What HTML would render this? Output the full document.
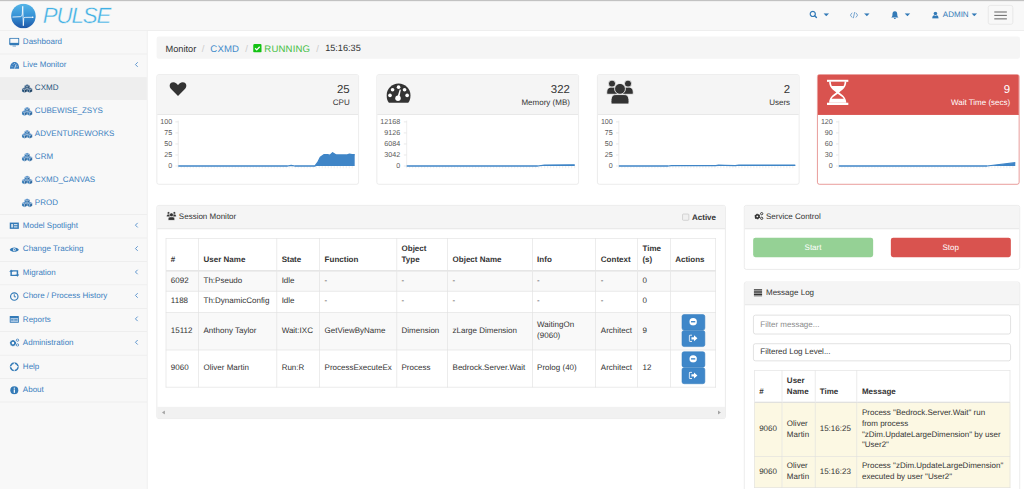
<!DOCTYPE html>
<html><head><meta charset="utf-8">
<style>
html,body{margin:0;padding:0;width:1024px;height:489px;overflow:hidden;background:#fff}
#root{text-rendering:geometricPrecision;position:absolute;left:0;top:0;width:1792px;height:856px;transform:scale(0.5714286);transform-origin:0 0;font-family:"Liberation Sans",sans-serif;font-size:14px;line-height:20px;color:#333;overflow:hidden;background:#fff}
.abs{position:absolute}
#hdr{position:absolute;left:0;top:0;width:1792px;height:54px;box-sizing:border-box;background:#f8f8f8;border-top:2px solid #c2c2c2;border-bottom:1px solid #e7e7e7}
.blue{color:#337ab7}
#side{position:absolute;left:0;top:54px;width:257px;height:802px;background:#f8f8f8;border-right:1px solid #e7e7e7}
.mi{position:relative;height:40px;border-bottom:1px solid #e7e7e7;color:#3b7fc0}
.mi .t{position:absolute;left:40px;top:7.8px;line-height:20px;white-space:nowrap}
.mi .ic{position:absolute;left:16px;top:12px}
.mi .ar{position:absolute;left:235px;top:12.5px}
.sub{position:relative;height:40px;color:#3b7fc0}
.sub .t{position:absolute;left:61px;top:7.8px;line-height:20px;white-space:nowrap}
.sub .ic{position:absolute;left:38px;top:12px}
.sub.act{background:#eee;color:#23527c}
.panel{position:absolute;box-sizing:border-box;border:1px solid #ddd;border-radius:4px;background:#fff;overflow:hidden}
.ph{background:#f5f5f5;border-bottom:1px solid #ddd;box-sizing:border-box;position:relative}
.red{border-color:#d9534f}
.red .ph{background:#d9534f;border-color:#d9534f;color:#fff}
.huge{position:absolute;right:15px;top:11.5px;font-size:20px;line-height:28.57px;text-align:right}
.lbl{position:absolute;right:15px;top:37px;line-height:20px;text-align:right;white-space:nowrap}
table{border-collapse:collapse;table-layout:fixed}
td,th{border:1px solid #ddd;padding:0 8px 3px;text-align:left;vertical-align:middle;line-height:19.25px;box-sizing:border-box}
th{font-weight:bold;vertical-align:bottom;border-bottom:2px solid #ddd;padding-bottom:9px}
.striped tr.o td{background:#f9f9f9}
.btnp{display:block;width:41px;height:28.5px;box-sizing:border-box;border:1px solid #3a80c0;background:#3f87c9;border-radius:4px;margin:0 auto;position:relative;left:0.7px;top:-1.2px}
</style></head><body>
<div id="root">

<!-- HEADER -->
<div id="hdr">
  <svg class="abs" style="left:19px;top:4px" width="44" height="44" viewBox="0 0 44 44">
    <defs><linearGradient id="lg" x1="0" y1="0" x2="0" y2="1"><stop offset="0" stop-color="#56b6e8"/><stop offset="0.5" stop-color="#3692d6"/><stop offset="1" stop-color="#1d55a6"/></linearGradient></defs>
    <circle cx="22" cy="22" r="21.5" fill="url(#lg)"/>
    <path d="M3.5 23.8 L16.5 23.2 C18.5 23 19.5 22 20 18.5 L20.8 5 L21.8 39 L22.6 26 C22.9 24.8 23.5 24.4 25 24.4 L38.5 24.2" fill="none" stroke="#fff" stroke-width="1.4" stroke-linejoin="round" stroke-linecap="round"/><circle cx="38.2" cy="24.2" r="1.3" fill="#fff"/>
  </svg>
  <div class="abs" style="left:75px;top:5px;font-size:39px;line-height:44px;font-style:italic;color:#40b0e4;letter-spacing:-2px;-webkit-text-stroke:0.7px #f8f8f8">PULSE</div>

  <!-- right icons -->
  <svg class="abs" style="left:1416px;top:16px" width="15" height="15" viewBox="0 0 17 17"><circle cx="7.2" cy="7.2" r="5.1" fill="none" stroke="#337ab7" stroke-width="2.4"/><path d="M11 11 L14.5 14.5" stroke="#337ab7" stroke-width="2.7" stroke-linecap="round"/></svg>
  <svg class="abs" style="left:1441px;top:21px" width="10" height="6" viewBox="0 0 10 6"><path d="M0 0 H10 L5 5.5Z" fill="#337ab7"/></svg>
  <svg class="abs" style="left:1487px;top:18px" width="15" height="13" viewBox="0 0 16 14"><path d="M4.5 2.5 L1.2 7 L4.5 11.5 M11.5 2.5 L14.8 7 L11.5 11.5 M9.3 1.2 L6.7 12.8" fill="none" stroke="#4a88c2" stroke-width="1.4"/></svg>
  <svg class="abs" style="left:1512px;top:21px" width="10" height="6" viewBox="0 0 10 6"><path d="M0 0 H10 L5 5.5Z" fill="#337ab7"/></svg>
  <svg class="abs" style="left:1559px;top:17px" width="14" height="14.5" viewBox="0 0 16 17"><path d="M8 1 C12 1 13 4.5 13 8 C13 11 14 12.5 15.5 13.5 H0.5 C2 12.5 3 11 3 8 C3 4.5 4 1 8 1Z M6 14.5 H10 C10 16 9 16.5 8 16.5 C7 16.5 6 16 6 14.5Z" fill="#337ab7"/></svg>
  <svg class="abs" style="left:1583px;top:21px" width="10" height="6" viewBox="0 0 10 6"><path d="M0 0 H10 L5 5.5Z" fill="#337ab7"/></svg>
  <svg class="abs" style="left:1631px;top:18px" width="12" height="12.5" viewBox="0 0 14 14"><circle cx="7" cy="3.8" r="3.6" fill="#337ab7"/><path d="M0.5 14 C0.5 9 2.5 7.5 4.5 7.5 L7 9 L9.5 7.5 C11.5 7.5 13.5 9 13.5 14Z" fill="#337ab7"/></svg>
  <div class="abs blue" style="left:1650px;top:12.5px;line-height:20px">ADMIN</div>
  <svg class="abs" style="left:1700px;top:21px" width="10" height="6" viewBox="0 0 10 6"><path d="M0 0 H10 L5 5.5Z" fill="#337ab7"/></svg>
  <div class="abs" style="left:1729px;top:7px;width:44px;height:34px;box-sizing:border-box;border:1px solid #ddd;border-radius:4px">
    <div class="abs" style="left:10px;top:10px;width:22px;height:2px;background:#777"></div>
    <div class="abs" style="left:10px;top:16px;width:22px;height:2px;background:#777"></div>
    <div class="abs" style="left:10px;top:22px;width:22px;height:2px;background:#777"></div>
  </div>
</div>

<!-- SIDEBAR -->
<div id="side">
  <div class="mi"><svg class="ic" width="18" height="16" viewBox="0 0 18 16"><rect x="1" y="1" width="16" height="11" rx="1" fill="none" stroke="#337ab7" stroke-width="2"/><rect x="1" y="9" width="16" height="3" fill="#337ab7"/><path d="M6 14 H12 V15.5 H6Z" fill="#337ab7"/></svg><span class="t">Dashboard</span></div>
  <div class="mi" style="height:280px">
    <div style="position:relative;height:40px"><svg class="ic" style="position:absolute;left:16.5px;top:12.5px" width="17" height="13" viewBox="0 0 17 13"><path d="M0.5 12.5 C0.3 5 3.8 0.5 8.5 0.5 C13.2 0.5 16.7 5 16.5 12.5Z" fill="#3b7fc0"/><path d="M8.5 12 L11 5" stroke="#f8f8f8" stroke-width="1.3"/><path d="M3.2 8 L4.8 8.6 M5 3.8 L6.2 5 M8.5 2.4 V4 M12 3.8 L10.8 5 M13.8 8 L12.2 8.6" stroke="#f8f8f8" stroke-width="1"/></svg><span class="t">Live Monitor</span><svg class="ar" width="8" height="10" viewBox="0 0 8 10"><path d="M6 1 L2 5 L6 9" fill="none" stroke="#5a93cc" stroke-width="1.7"/></svg></div>
    <div class="sub act"><svg class="ic" style="top:11.5px" width="19" height="16" viewBox="0 0 19 16"><path d="M9.5 0.3 L14.1 2.5999999999999996 L9.5 4.8999999999999995 L4.9 2.5999999999999996Z" stroke="#f8f8f8" stroke-width="0.4" fill="#4a6e94"/><path d="M4.9 2.5999999999999996 L9.5 4.8999999999999995 L9.5 9.9 L4.9 7.6Z" stroke="#f8f8f8" stroke-width="0.4" fill="#23527c"/><path d="M9.5 4.8999999999999995 L14.1 2.5999999999999996 L14.1 7.6 L9.5 9.9Z" stroke="#f8f8f8" stroke-width="0.4" fill="#1b4063"/><path d="M4.9 5.9 L9.5 8.2 L4.9 10.5 L0.3000000000000007 8.2Z" stroke="#f8f8f8" stroke-width="0.4" fill="#4a6e94"/><path d="M0.3000000000000007 8.2 L4.9 10.5 L4.9 15.5 L0.3000000000000007 13.2Z" stroke="#f8f8f8" stroke-width="0.4" fill="#23527c"/><path d="M4.9 10.5 L9.5 8.2 L9.5 13.2 L4.9 15.5Z" stroke="#f8f8f8" stroke-width="0.4" fill="#1b4063"/><path d="M14.1 5.9 L18.7 8.2 L14.1 10.5 L9.5 8.2Z" stroke="#f8f8f8" stroke-width="0.4" fill="#4a6e94"/><path d="M9.5 8.2 L14.1 10.5 L14.1 15.5 L9.5 13.2Z" stroke="#f8f8f8" stroke-width="0.4" fill="#23527c"/><path d="M14.1 10.5 L18.7 8.2 L18.7 13.2 L14.1 15.5Z" stroke="#f8f8f8" stroke-width="0.4" fill="#1b4063"/></svg><span class="t">CXMD</span></div>
    <div class="sub"><svg class="ic" style="top:11.5px" width="19" height="16" viewBox="0 0 19 16"><path d="M9.5 0.3 L14.1 2.5999999999999996 L9.5 4.8999999999999995 L4.9 2.5999999999999996Z" stroke="#f8f8f8" stroke-width="0.4" fill="#5b93cc"/><path d="M4.9 2.5999999999999996 L9.5 4.8999999999999995 L9.5 9.9 L4.9 7.6Z" stroke="#f8f8f8" stroke-width="0.4" fill="#337ab7"/><path d="M9.5 4.8999999999999995 L14.1 2.5999999999999996 L14.1 7.6 L9.5 9.9Z" stroke="#f8f8f8" stroke-width="0.4" fill="#2b67a0"/><path d="M4.9 5.9 L9.5 8.2 L4.9 10.5 L0.3000000000000007 8.2Z" stroke="#f8f8f8" stroke-width="0.4" fill="#5b93cc"/><path d="M0.3000000000000007 8.2 L4.9 10.5 L4.9 15.5 L0.3000000000000007 13.2Z" stroke="#f8f8f8" stroke-width="0.4" fill="#337ab7"/><path d="M4.9 10.5 L9.5 8.2 L9.5 13.2 L4.9 15.5Z" stroke="#f8f8f8" stroke-width="0.4" fill="#2b67a0"/><path d="M14.1 5.9 L18.7 8.2 L14.1 10.5 L9.5 8.2Z" stroke="#f8f8f8" stroke-width="0.4" fill="#5b93cc"/><path d="M9.5 8.2 L14.1 10.5 L14.1 15.5 L9.5 13.2Z" stroke="#f8f8f8" stroke-width="0.4" fill="#337ab7"/><path d="M14.1 10.5 L18.7 8.2 L18.7 13.2 L14.1 15.5Z" stroke="#f8f8f8" stroke-width="0.4" fill="#2b67a0"/></svg><span class="t">CUBEWISE_ZSYS</span></div>
    <div class="sub"><svg class="ic" style="top:11.5px" width="19" height="16" viewBox="0 0 19 16"><path d="M9.5 0.3 L14.1 2.5999999999999996 L9.5 4.8999999999999995 L4.9 2.5999999999999996Z" stroke="#f8f8f8" stroke-width="0.4" fill="#5b93cc"/><path d="M4.9 2.5999999999999996 L9.5 4.8999999999999995 L9.5 9.9 L4.9 7.6Z" stroke="#f8f8f8" stroke-width="0.4" fill="#337ab7"/><path d="M9.5 4.8999999999999995 L14.1 2.5999999999999996 L14.1 7.6 L9.5 9.9Z" stroke="#f8f8f8" stroke-width="0.4" fill="#2b67a0"/><path d="M4.9 5.9 L9.5 8.2 L4.9 10.5 L0.3000000000000007 8.2Z" stroke="#f8f8f8" stroke-width="0.4" fill="#5b93cc"/><path d="M0.3000000000000007 8.2 L4.9 10.5 L4.9 15.5 L0.3000000000000007 13.2Z" stroke="#f8f8f8" stroke-width="0.4" fill="#337ab7"/><path d="M4.9 10.5 L9.5 8.2 L9.5 13.2 L4.9 15.5Z" stroke="#f8f8f8" stroke-width="0.4" fill="#2b67a0"/><path d="M14.1 5.9 L18.7 8.2 L14.1 10.5 L9.5 8.2Z" stroke="#f8f8f8" stroke-width="0.4" fill="#5b93cc"/><path d="M9.5 8.2 L14.1 10.5 L14.1 15.5 L9.5 13.2Z" stroke="#f8f8f8" stroke-width="0.4" fill="#337ab7"/><path d="M14.1 10.5 L18.7 8.2 L18.7 13.2 L14.1 15.5Z" stroke="#f8f8f8" stroke-width="0.4" fill="#2b67a0"/></svg><span class="t">ADVENTUREWORKS</span></div>
    <div class="sub"><svg class="ic" style="top:11.5px" width="19" height="16" viewBox="0 0 19 16"><path d="M9.5 0.3 L14.1 2.5999999999999996 L9.5 4.8999999999999995 L4.9 2.5999999999999996Z" stroke="#f8f8f8" stroke-width="0.4" fill="#5b93cc"/><path d="M4.9 2.5999999999999996 L9.5 4.8999999999999995 L9.5 9.9 L4.9 7.6Z" stroke="#f8f8f8" stroke-width="0.4" fill="#337ab7"/><path d="M9.5 4.8999999999999995 L14.1 2.5999999999999996 L14.1 7.6 L9.5 9.9Z" stroke="#f8f8f8" stroke-width="0.4" fill="#2b67a0"/><path d="M4.9 5.9 L9.5 8.2 L4.9 10.5 L0.3000000000000007 8.2Z" stroke="#f8f8f8" stroke-width="0.4" fill="#5b93cc"/><path d="M0.3000000000000007 8.2 L4.9 10.5 L4.9 15.5 L0.3000000000000007 13.2Z" stroke="#f8f8f8" stroke-width="0.4" fill="#337ab7"/><path d="M4.9 10.5 L9.5 8.2 L9.5 13.2 L4.9 15.5Z" stroke="#f8f8f8" stroke-width="0.4" fill="#2b67a0"/><path d="M14.1 5.9 L18.7 8.2 L14.1 10.5 L9.5 8.2Z" stroke="#f8f8f8" stroke-width="0.4" fill="#5b93cc"/><path d="M9.5 8.2 L14.1 10.5 L14.1 15.5 L9.5 13.2Z" stroke="#f8f8f8" stroke-width="0.4" fill="#337ab7"/><path d="M14.1 10.5 L18.7 8.2 L18.7 13.2 L14.1 15.5Z" stroke="#f8f8f8" stroke-width="0.4" fill="#2b67a0"/></svg><span class="t">CRM</span></div>
    <div class="sub"><svg class="ic" style="top:11.5px" width="19" height="16" viewBox="0 0 19 16"><path d="M9.5 0.3 L14.1 2.5999999999999996 L9.5 4.8999999999999995 L4.9 2.5999999999999996Z" stroke="#f8f8f8" stroke-width="0.4" fill="#5b93cc"/><path d="M4.9 2.5999999999999996 L9.5 4.8999999999999995 L9.5 9.9 L4.9 7.6Z" stroke="#f8f8f8" stroke-width="0.4" fill="#337ab7"/><path d="M9.5 4.8999999999999995 L14.1 2.5999999999999996 L14.1 7.6 L9.5 9.9Z" stroke="#f8f8f8" stroke-width="0.4" fill="#2b67a0"/><path d="M4.9 5.9 L9.5 8.2 L4.9 10.5 L0.3000000000000007 8.2Z" stroke="#f8f8f8" stroke-width="0.4" fill="#5b93cc"/><path d="M0.3000000000000007 8.2 L4.9 10.5 L4.9 15.5 L0.3000000000000007 13.2Z" stroke="#f8f8f8" stroke-width="0.4" fill="#337ab7"/><path d="M4.9 10.5 L9.5 8.2 L9.5 13.2 L4.9 15.5Z" stroke="#f8f8f8" stroke-width="0.4" fill="#2b67a0"/><path d="M14.1 5.9 L18.7 8.2 L14.1 10.5 L9.5 8.2Z" stroke="#f8f8f8" stroke-width="0.4" fill="#5b93cc"/><path d="M9.5 8.2 L14.1 10.5 L14.1 15.5 L9.5 13.2Z" stroke="#f8f8f8" stroke-width="0.4" fill="#337ab7"/><path d="M14.1 10.5 L18.7 8.2 L18.7 13.2 L14.1 15.5Z" stroke="#f8f8f8" stroke-width="0.4" fill="#2b67a0"/></svg><span class="t">CXMD_CANVAS</span></div>
    <div class="sub"><svg class="ic" style="top:11.5px" width="19" height="16" viewBox="0 0 19 16"><path d="M9.5 0.3 L14.1 2.5999999999999996 L9.5 4.8999999999999995 L4.9 2.5999999999999996Z" stroke="#f8f8f8" stroke-width="0.4" fill="#5b93cc"/><path d="M4.9 2.5999999999999996 L9.5 4.8999999999999995 L9.5 9.9 L4.9 7.6Z" stroke="#f8f8f8" stroke-width="0.4" fill="#337ab7"/><path d="M9.5 4.8999999999999995 L14.1 2.5999999999999996 L14.1 7.6 L9.5 9.9Z" stroke="#f8f8f8" stroke-width="0.4" fill="#2b67a0"/><path d="M4.9 5.9 L9.5 8.2 L4.9 10.5 L0.3000000000000007 8.2Z" stroke="#f8f8f8" stroke-width="0.4" fill="#5b93cc"/><path d="M0.3000000000000007 8.2 L4.9 10.5 L4.9 15.5 L0.3000000000000007 13.2Z" stroke="#f8f8f8" stroke-width="0.4" fill="#337ab7"/><path d="M4.9 10.5 L9.5 8.2 L9.5 13.2 L4.9 15.5Z" stroke="#f8f8f8" stroke-width="0.4" fill="#2b67a0"/><path d="M14.1 5.9 L18.7 8.2 L14.1 10.5 L9.5 8.2Z" stroke="#f8f8f8" stroke-width="0.4" fill="#5b93cc"/><path d="M9.5 8.2 L14.1 10.5 L14.1 15.5 L9.5 13.2Z" stroke="#f8f8f8" stroke-width="0.4" fill="#337ab7"/><path d="M14.1 10.5 L18.7 8.2 L18.7 13.2 L14.1 15.5Z" stroke="#f8f8f8" stroke-width="0.4" fill="#2b67a0"/></svg><span class="t">PROD</span></div>
  </div>
  <div class="mi"><svg class="ic" width="18" height="14" viewBox="0 0 18 14"><rect x="1" y="1.5" width="16" height="11" fill="#337ab7"/><path d="M3.5 4 H7 V10 H3.5Z M8.5 4 H14.5 V6 H8.5Z M8.5 8 H14.5 V10 H8.5Z" fill="#f8f8f8" opacity="0.8"/></svg><span class="t">Model Spotlight</span><svg class="ar" width="8" height="10" viewBox="0 0 8 10"><path d="M6 1 L2 5 L6 9" fill="none" stroke="#5a93cc" stroke-width="1.7"/></svg></div>
  <div class="mi"><svg class="ic" style="top:14px" width="18" height="12" viewBox="0 0 18 12"><path d="M1 6 C4 1 14 1 17 6 C14 11 4 11 1 6Z" fill="#337ab7"/><circle cx="9" cy="6" r="2.5" fill="#f8f8f8"/><circle cx="9" cy="6" r="1.3" fill="#337ab7"/></svg><span class="t">Change Tracking</span><svg class="ar" width="8" height="10" viewBox="0 0 8 10"><path d="M6 1 L2 5 L6 9" fill="none" stroke="#5a93cc" stroke-width="1.7"/></svg></div>
  <div class="mi"><svg class="ic" style="top:13px" width="18" height="14" viewBox="0 0 18 14"><path d="M3.5 0.5 L7 4.5 H4.8 V9.8 H11.5 L13.5 12.2 H2.2 V4.5 H0 Z M14.5 13.5 L11 9.5 H13.2 V4.2 H6.5 L4.5 1.8 H15.8 V9.5 H18 Z" fill="#337ab7"/></svg><span class="t">Migration</span><svg class="ar" width="8" height="10" viewBox="0 0 8 10"><path d="M6 1 L2 5 L6 9" fill="none" stroke="#5a93cc" stroke-width="1.7"/></svg></div>
  <div class="mi"><svg class="ic" width="18" height="16" viewBox="0 0 18 16"><circle cx="9" cy="8" r="6.5" fill="none" stroke="#337ab7" stroke-width="2"/><path d="M9 4 V8.5 H12" fill="none" stroke="#337ab7" stroke-width="1.7"/></svg><span class="t">Chore / Process History</span><svg class="ar" width="8" height="10" viewBox="0 0 8 10"><path d="M6 1 L2 5 L6 9" fill="none" stroke="#5a93cc" stroke-width="1.7"/></svg></div>
  <div class="mi"><svg class="ic" style="top:11.5px" width="18" height="14" viewBox="0 0 18 14"><rect x="1" y="1" width="16" height="12" rx="1" fill="#337ab7"/><rect x="2.5" y="4.5" width="13" height="7" fill="#a9c6e3"/><rect x="3.5" y="7" width="4" height="1.6" fill="#337ab7"/><rect x="9" y="7" width="5.5" height="1.6" fill="#337ab7"/></svg><span class="t">Reports</span><svg class="ar" width="8" height="10" viewBox="0 0 8 10"><path d="M6 1 L2 5 L6 9" fill="none" stroke="#5a93cc" stroke-width="1.7"/></svg></div>
  <div class="mi"><svg class="ic" style="top:11px" width="19" height="15" viewBox="0 0 20 16"><circle cx="7" cy="9" r="4.8" fill="none" stroke="#337ab7" stroke-width="2.2" stroke-dasharray="1.6 0.9"/><circle cx="7" cy="9" r="3.6" fill="none" stroke="#337ab7" stroke-width="2.4"/><circle cx="15.5" cy="3.5" r="2.2" fill="none" stroke="#4a88c2" stroke-width="1.7"/><circle cx="15.5" cy="12.5" r="2.2" fill="none" stroke="#4a88c2" stroke-width="1.7"/></svg><span class="t">Administration</span><svg class="ar" width="8" height="10" viewBox="0 0 8 10"><path d="M6 1 L2 5 L6 9" fill="none" stroke="#5a93cc" stroke-width="1.7"/></svg></div>
  <div class="mi"><svg class="ic" width="18" height="16" viewBox="0 0 18 16"><circle cx="9" cy="8" r="6.5" fill="none" stroke="#337ab7" stroke-width="2.8"/><path d="M9 1 V15 M2 8 H16" stroke="#f8f8f8" stroke-width="1.8"/><circle cx="9" cy="8" r="3" fill="#f8f8f8"/></svg><span class="t">Help</span></div>
  <div class="mi"><svg class="ic" width="18" height="16" viewBox="0 0 18 16"><circle cx="9" cy="8" r="7" fill="#337ab7"/><rect x="8" y="6.5" width="2.2" height="6" fill="#f8f8f8"/><circle cx="9.1" cy="4.3" r="1.2" fill="#f8f8f8"/></svg><span class="t">About</span></div>
</div>

<!-- BREADCRUMB -->
<div class="abs" style="left:274px;top:64px;width:1511px;height:39px;background:#f5f5f5;border-radius:4px;font-size:16.8px;line-height:20px">
  <div class="abs" style="left:15.5px;top:12px;white-space:nowrap;font-size:16.2px">Monitor</div>
  <div class="abs" style="left:79px;top:12px;color:#ccc">/</div>
  <div class="abs" style="left:94px;top:12px;color:#428bca;letter-spacing:0.3px">CXMD</div>
  <div class="abs" style="left:155px;top:12px;color:#ccc">/</div>
  <svg class="abs" style="left:169px;top:12.5px" width="15" height="15" viewBox="0 0 15 15"><rect x="0" y="0" width="15" height="15" rx="2.5" fill="#14c214"/><path d="M3.5 7.5 L6.3 10.3 L11.5 4.8" fill="none" stroke="#fff" stroke-width="2.2"/></svg>
  <div class="abs" style="left:188.5px;top:12px;color:#45c045;letter-spacing:0.3px">RUNNING</div>
  <div class="abs" style="left:279.5px;top:12px;color:#ccc">/</div>
  <div class="abs" style="left:295px;top:12px;font-size:16px">15:16:35</div>
</div>

<div class="panel" style="left:274px;top:130px;width:354px;height:193px">
<svg class="abs" style="left:0;top:0" width="354" height="193" viewBox="0 0 354 193"><line x1="37" y1="80" x2="37" y2="159.5" stroke="#ebebeb" stroke-width="1.5"/><line x1="32" y1="159.50" x2="37" y2="159.50" stroke="#e5e5e5" stroke-width="1.5"/><text x="26.4" y="162.80" text-anchor="end" font-size="12.5" fill="#5a5a5a">0</text><line x1="32" y1="140.20" x2="37" y2="140.20" stroke="#e5e5e5" stroke-width="1.5"/><text x="26.4" y="143.50" text-anchor="end" font-size="12.5" fill="#5a5a5a">25</text><line x1="32" y1="120.90" x2="37" y2="120.90" stroke="#e5e5e5" stroke-width="1.5"/><text x="26.4" y="124.20" text-anchor="end" font-size="12.5" fill="#5a5a5a">50</text><line x1="32" y1="101.60" x2="37" y2="101.60" stroke="#e5e5e5" stroke-width="1.5"/><text x="26.4" y="104.90" text-anchor="end" font-size="12.5" fill="#5a5a5a">75</text><line x1="32" y1="82.30" x2="37" y2="82.30" stroke="#e5e5e5" stroke-width="1.5"/><text x="26.4" y="85.60" text-anchor="end" font-size="12.5" fill="#5a5a5a">100</text><path d="M37.00 159.5 v4 M42.25 159.5 v4 M47.50 159.5 v4 M52.75 159.5 v4 M58.00 159.5 v4 M63.25 159.5 v4 M68.50 159.5 v4 M73.75 159.5 v4 M79.00 159.5 v4 M84.25 159.5 v4 M89.50 159.5 v4 M94.75 159.5 v4 M100.00 159.5 v4 M105.25 159.5 v4 M110.50 159.5 v4 M115.75 159.5 v4 M121.00 159.5 v4 M126.25 159.5 v4 M131.50 159.5 v4 M136.75 159.5 v4 M142.00 159.5 v4 M147.25 159.5 v4 M152.50 159.5 v4 M157.75 159.5 v4 M163.00 159.5 v4 M168.25 159.5 v4 M173.50 159.5 v4 M178.75 159.5 v4 M184.00 159.5 v4 M189.25 159.5 v4 M194.50 159.5 v4 M199.75 159.5 v4 M205.00 159.5 v4 M210.25 159.5 v4 M215.50 159.5 v4 M220.75 159.5 v4 M226.00 159.5 v4 M231.25 159.5 v4 M236.50 159.5 v4 M241.75 159.5 v4 M247.00 159.5 v4 M252.25 159.5 v4 M257.50 159.5 v4 M262.75 159.5 v4 M268.00 159.5 v4 M273.25 159.5 v4 M278.50 159.5 v4 M283.75 159.5 v4 M289.00 159.5 v4 M294.25 159.5 v4 M299.50 159.5 v4 M304.75 159.5 v4 M310.00 159.5 v4 M315.25 159.5 v4 M320.50 159.5 v4 M325.75 159.5 v4 M331.00 159.5 v4 M336.25 159.5 v4 M341.50 159.5 v4 " stroke="#e8e8e8" stroke-width="1.2"/><path d="M37.00 159.50 L228.39 159.50 L234.57 158.34 L240.74 159.50 L276.24 159.50 L280.87 153.32 L285.50 144.06 L291.68 139.81 L299.39 139.81 L302.48 140.59 L307.11 136.34 L313.29 140.20 L331.81 140.20 L336.44 138.66 L341.07 139.43 L345.70 139.43 L345.70 159.5 L37.00 159.5Z" fill="#3f85c7"/><path d="M37.00 159.50 L228.39 159.50 L234.57 158.34 L240.74 159.50 L276.24 159.50 L280.87 153.32 L285.50 144.06 L291.68 139.81 L299.39 139.81 L302.48 140.59 L307.11 136.34 L313.29 140.20 L331.81 140.20 L336.44 138.66 L341.07 139.43 L345.70 139.43" fill="none" stroke="#3f85c7" stroke-width="2.2" stroke-linejoin="round"/></svg>
<div class="ph" style="height:70px"><svg class="abs" style="left:21px;top:12px" width="31" height="26" viewBox="0 0 31 26"><path d="M15.5 25 L3 12.5 C-1 8.5 0.5 1 7.5 1 C11 1 13.5 3.5 15.5 6 C17.5 3.5 20 1 23.5 1 C30.5 1 32 8.5 28 12.5Z" fill="#333"/></svg><div class="huge">25</div><div class="lbl">CPU</div></div>
</div>
<div class="panel" style="left:659.3px;top:130px;width:354px;height:193px">
<svg class="abs" style="left:0;top:0" width="354" height="193" viewBox="0 0 354 193"><line x1="51.7" y1="80" x2="51.7" y2="159.5" stroke="#ebebeb" stroke-width="1.5"/><line x1="46.7" y1="159.50" x2="51.7" y2="159.50" stroke="#e5e5e5" stroke-width="1.5"/><text x="40.3" y="162.80" text-anchor="end" font-size="12.5" fill="#5a5a5a">0</text><line x1="46.7" y1="140.20" x2="51.7" y2="140.20" stroke="#e5e5e5" stroke-width="1.5"/><text x="40.3" y="143.50" text-anchor="end" font-size="12.5" fill="#5a5a5a">3042</text><line x1="46.7" y1="120.90" x2="51.7" y2="120.90" stroke="#e5e5e5" stroke-width="1.5"/><text x="40.3" y="124.20" text-anchor="end" font-size="12.5" fill="#5a5a5a">6084</text><line x1="46.7" y1="101.60" x2="51.7" y2="101.60" stroke="#e5e5e5" stroke-width="1.5"/><text x="40.3" y="104.90" text-anchor="end" font-size="12.5" fill="#5a5a5a">9126</text><line x1="46.7" y1="82.30" x2="51.7" y2="82.30" stroke="#e5e5e5" stroke-width="1.5"/><text x="40.3" y="85.60" text-anchor="end" font-size="12.5" fill="#5a5a5a">12168</text><path d="M51.70 159.5 v4 M56.95 159.5 v4 M62.20 159.5 v4 M67.45 159.5 v4 M72.70 159.5 v4 M77.95 159.5 v4 M83.20 159.5 v4 M88.45 159.5 v4 M93.70 159.5 v4 M98.95 159.5 v4 M104.20 159.5 v4 M109.45 159.5 v4 M114.70 159.5 v4 M119.95 159.5 v4 M125.20 159.5 v4 M130.45 159.5 v4 M135.70 159.5 v4 M140.95 159.5 v4 M146.20 159.5 v4 M151.45 159.5 v4 M156.70 159.5 v4 M161.95 159.5 v4 M167.20 159.5 v4 M172.45 159.5 v4 M177.70 159.5 v4 M182.95 159.5 v4 M188.20 159.5 v4 M193.45 159.5 v4 M198.70 159.5 v4 M203.95 159.5 v4 M209.20 159.5 v4 M214.45 159.5 v4 M219.70 159.5 v4 M224.95 159.5 v4 M230.20 159.5 v4 M235.45 159.5 v4 M240.70 159.5 v4 M245.95 159.5 v4 M251.20 159.5 v4 M256.45 159.5 v4 M261.70 159.5 v4 M266.95 159.5 v4 M272.20 159.5 v4 M277.45 159.5 v4 M282.70 159.5 v4 M287.95 159.5 v4 M293.20 159.5 v4 M298.45 159.5 v4 M303.70 159.5 v4 M308.95 159.5 v4 M314.20 159.5 v4 M319.45 159.5 v4 M324.70 159.5 v4 M329.95 159.5 v4 M335.20 159.5 v4 M340.45 159.5 v4 M345.70 159.5 v4 " stroke="#e8e8e8" stroke-width="1.2"/><path d="M51.70 159.50 L281.02 159.50 L292.78 157.91 L345.70 157.41 L345.70 159.5 L51.70 159.5Z" fill="#3f85c7"/><path d="M51.70 159.50 L281.02 159.50 L292.78 157.91 L345.70 157.41" fill="none" stroke="#3f85c7" stroke-width="2.2" stroke-linejoin="round"/></svg>
<div class="ph" style="height:70px"><svg class="abs" style="left:16px;top:14px" width="43" height="36" viewBox="0 0 43 36"><path d="M21.5 1 C33 1 42.5 10.5 42.5 22 C42.5 27 41 31.5 38.5 35 H4.5 C2 31.5 0.5 27 0.5 22 C0.5 10.5 10 1 21.5 1Z" fill="#333"/><g fill="#fff"><circle cx="21.5" cy="7.5" r="3.2"/><circle cx="11" cy="12" r="3.2"/><circle cx="32" cy="12" r="3.2"/><circle cx="6.5" cy="22" r="3.2"/><circle cx="36.5" cy="22" r="3.2"/><circle cx="20.5" cy="27" r="4.8"/><path d="M19 26 L23.5 11.5 L25.5 12 L22.5 27Z"/></g></svg><div class="huge">322</div><div class="lbl">Memory (MB)</div></div>
</div>
<div class="panel" style="left:1044.6px;top:130px;width:354px;height:193px">
<svg class="abs" style="left:0;top:0" width="354" height="193" viewBox="0 0 354 193"><line x1="37" y1="80" x2="37" y2="159.5" stroke="#ebebeb" stroke-width="1.5"/><line x1="32" y1="159.50" x2="37" y2="159.50" stroke="#e5e5e5" stroke-width="1.5"/><text x="26.4" y="162.80" text-anchor="end" font-size="12.5" fill="#5a5a5a">0</text><line x1="32" y1="140.20" x2="37" y2="140.20" stroke="#e5e5e5" stroke-width="1.5"/><text x="26.4" y="143.50" text-anchor="end" font-size="12.5" fill="#5a5a5a">25</text><line x1="32" y1="120.90" x2="37" y2="120.90" stroke="#e5e5e5" stroke-width="1.5"/><text x="26.4" y="124.20" text-anchor="end" font-size="12.5" fill="#5a5a5a">50</text><line x1="32" y1="101.60" x2="37" y2="101.60" stroke="#e5e5e5" stroke-width="1.5"/><text x="26.4" y="104.90" text-anchor="end" font-size="12.5" fill="#5a5a5a">75</text><line x1="32" y1="82.30" x2="37" y2="82.30" stroke="#e5e5e5" stroke-width="1.5"/><text x="26.4" y="85.60" text-anchor="end" font-size="12.5" fill="#5a5a5a">100</text><path d="M37.00 159.5 v4 M42.25 159.5 v4 M47.50 159.5 v4 M52.75 159.5 v4 M58.00 159.5 v4 M63.25 159.5 v4 M68.50 159.5 v4 M73.75 159.5 v4 M79.00 159.5 v4 M84.25 159.5 v4 M89.50 159.5 v4 M94.75 159.5 v4 M100.00 159.5 v4 M105.25 159.5 v4 M110.50 159.5 v4 M115.75 159.5 v4 M121.00 159.5 v4 M126.25 159.5 v4 M131.50 159.5 v4 M136.75 159.5 v4 M142.00 159.5 v4 M147.25 159.5 v4 M152.50 159.5 v4 M157.75 159.5 v4 M163.00 159.5 v4 M168.25 159.5 v4 M173.50 159.5 v4 M178.75 159.5 v4 M184.00 159.5 v4 M189.25 159.5 v4 M194.50 159.5 v4 M199.75 159.5 v4 M205.00 159.5 v4 M210.25 159.5 v4 M215.50 159.5 v4 M220.75 159.5 v4 M226.00 159.5 v4 M231.25 159.5 v4 M236.50 159.5 v4 M241.75 159.5 v4 M247.00 159.5 v4 M252.25 159.5 v4 M257.50 159.5 v4 M262.75 159.5 v4 M268.00 159.5 v4 M273.25 159.5 v4 M278.50 159.5 v4 M283.75 159.5 v4 M289.00 159.5 v4 M294.25 159.5 v4 M299.50 159.5 v4 M304.75 159.5 v4 M310.00 159.5 v4 M315.25 159.5 v4 M320.50 159.5 v4 M325.75 159.5 v4 M331.00 159.5 v4 M336.25 159.5 v4 M341.50 159.5 v4 " stroke="#e8e8e8" stroke-width="1.2"/><path d="M37.00 159.50 L123.44 159.50 L129.61 158.73 L206.78 158.73 L211.42 157.96 L222.22 158.34 L240.74 158.73 L246.92 157.96 L345.70 157.96 L345.70 159.5 L37.00 159.5Z" fill="#3f85c7"/><path d="M37.00 159.50 L123.44 159.50 L129.61 158.73 L206.78 158.73 L211.42 157.96 L222.22 158.34 L240.74 158.73 L246.92 157.96 L345.70 157.96" fill="none" stroke="#3f85c7" stroke-width="2.2" stroke-linejoin="round"/></svg>
<div class="ph" style="height:70px"><svg class="abs" style="left:15px;top:7.5px" width="48" height="44" viewBox="0 0 48 44"><g fill="#333" stroke="#f5f5f5" stroke-width="1.5"><circle cx="10" cy="7.5" r="6.3"/><circle cx="38" cy="7.5" r="6.3"/><path d="M1 26 C0 17 3 13.5 9 13.5 L15 13.5 C19 13.5 20 17 20 26Z"/><path d="M47 26 C48 17 45 13.5 39 13.5 L33 13.5 C29 13.5 28 17 28 26Z"/><circle cx="24" cy="16.5" r="9.5"/><path d="M8.5 43 C7.5 31 10 26.5 17 26.5 L31 26.5 C38 26.5 40.5 31 39.5 43Z"/></g></svg><div class="huge">2</div><div class="lbl">Users</div></div>
</div>
<div class="panel red" style="left:1429.9px;top:130px;width:354px;height:193px">
<svg class="abs" style="left:0;top:0" width="354" height="193" viewBox="0 0 354 193"><line x1="37" y1="80" x2="37" y2="159.5" stroke="#ebebeb" stroke-width="1.5"/><line x1="32" y1="159.50" x2="37" y2="159.50" stroke="#e5e5e5" stroke-width="1.5"/><text x="26.4" y="162.80" text-anchor="end" font-size="12.5" fill="#5a5a5a">0</text><line x1="32" y1="140.20" x2="37" y2="140.20" stroke="#e5e5e5" stroke-width="1.5"/><text x="26.4" y="143.50" text-anchor="end" font-size="12.5" fill="#5a5a5a">30</text><line x1="32" y1="120.90" x2="37" y2="120.90" stroke="#e5e5e5" stroke-width="1.5"/><text x="26.4" y="124.20" text-anchor="end" font-size="12.5" fill="#5a5a5a">60</text><line x1="32" y1="101.60" x2="37" y2="101.60" stroke="#e5e5e5" stroke-width="1.5"/><text x="26.4" y="104.90" text-anchor="end" font-size="12.5" fill="#5a5a5a">90</text><line x1="32" y1="82.30" x2="37" y2="82.30" stroke="#e5e5e5" stroke-width="1.5"/><text x="26.4" y="85.60" text-anchor="end" font-size="12.5" fill="#5a5a5a">120</text><path d="M37.00 159.5 v4 M42.25 159.5 v4 M47.50 159.5 v4 M52.75 159.5 v4 M58.00 159.5 v4 M63.25 159.5 v4 M68.50 159.5 v4 M73.75 159.5 v4 M79.00 159.5 v4 M84.25 159.5 v4 M89.50 159.5 v4 M94.75 159.5 v4 M100.00 159.5 v4 M105.25 159.5 v4 M110.50 159.5 v4 M115.75 159.5 v4 M121.00 159.5 v4 M126.25 159.5 v4 M131.50 159.5 v4 M136.75 159.5 v4 M142.00 159.5 v4 M147.25 159.5 v4 M152.50 159.5 v4 M157.75 159.5 v4 M163.00 159.5 v4 M168.25 159.5 v4 M173.50 159.5 v4 M178.75 159.5 v4 M184.00 159.5 v4 M189.25 159.5 v4 M194.50 159.5 v4 M199.75 159.5 v4 M205.00 159.5 v4 M210.25 159.5 v4 M215.50 159.5 v4 M220.75 159.5 v4 M226.00 159.5 v4 M231.25 159.5 v4 M236.50 159.5 v4 M241.75 159.5 v4 M247.00 159.5 v4 M252.25 159.5 v4 M257.50 159.5 v4 M262.75 159.5 v4 M268.00 159.5 v4 M273.25 159.5 v4 M278.50 159.5 v4 M283.75 159.5 v4 M289.00 159.5 v4 M294.25 159.5 v4 M299.50 159.5 v4 M304.75 159.5 v4 M310.00 159.5 v4 M315.25 159.5 v4 M320.50 159.5 v4 M325.75 159.5 v4 M331.00 159.5 v4 M336.25 159.5 v4 M341.50 159.5 v4 " stroke="#e8e8e8" stroke-width="1.2"/><path d="M37.00 159.50 L296.31 159.50 L345.70 153.71 L345.70 159.5 L37.00 159.5Z" fill="#3f85c7"/><path d="M37.00 159.50 L296.31 159.50 L345.70 153.71" fill="none" stroke="#3f85c7" stroke-width="2.2" stroke-linejoin="round"/></svg>
<div class="ph" style="height:70px"><svg class="abs" style="left:16px;top:8px" width="38" height="45" viewBox="0 0 38 44.5"><rect x="0" y="0" width="38" height="4" fill="#fff"/><rect x="0" y="40.5" width="38" height="4" fill="#fff"/><path d="M4 4 H34 C34 13 28 18 21.5 22.5 C28 27 34 32 34 40.5 H4 C4 32 10 27 16.5 22.5 C10 18 4 13 4 4Z" fill="#fff"/><path d="M7 4 H31 C31 7 30.3 9.5 29.3 11.3 H8.7 C7.7 9.5 7 7 7 4Z" fill="#d9534f"/><path d="M19 25 C23 28 27.5 30.5 29.6 33.4 H8.4 C10.5 30.5 15 28 19 25Z" fill="#d9534f"/></svg><div class="huge">9</div><div class="lbl">Wait Time (secs)</div></div>
</div>
<div class="panel" style="left:274px;top:358.75px;width:996px;height:374px">
<div class="ph" style="height:41px"><svg class="abs" style="left:15.5px;top:10.5px" width="18" height="16" viewBox="0 0 48 44"><g fill="#333" stroke="#f5f5f5" stroke-width="2.5"><circle cx="10" cy="7.5" r="6.3"/><circle cx="38" cy="7.5" r="6.3"/><path d="M1 26 C0 17 3 13.5 9 13.5 L15 13.5 C19 13.5 20 17 20 26Z"/><path d="M47 26 C48 17 45 13.5 39 13.5 L33 13.5 C29 13.5 28 17 28 26Z"/><circle cx="24" cy="16.5" r="9.5"/><path d="M8.5 43 C7.5 31 10 26.5 17 26.5 L31 26.5 C38 26.5 40.5 31 39.5 43Z"/></g></svg><div class="abs" style="left:38px;top:8.5px">Session Monitor</div><div class="abs" style="left:919px;top:14px;width:10px;height:10px;border:1px solid #bbb;border-radius:2px;background:#f0f0f0"></div><div class="abs" style="left:936px;top:10px;font-weight:bold">Active</div></div>
<table class="abs striped" style="left:15px;top:57.2px;width:962.0px">
<colgroup><col style="width:57.2px"><col style="width:136.7px"><col style="width:75.2px"><col style="width:134.6px"><col style="width:89.3px"><col style="width:148px"><col style="width:111.5px"><col style="width:72.8px"><col style="width:57.4px"><col style="width:79.3px"></colgroup>
<tr style="height:56.3px"><th>#</th><th>User Name</th><th>State</th><th>Function</th><th>Object<br>Type</th><th>Object Name</th><th>Info</th><th>Context</th><th>Time<br>(s)</th><th>Actions</th></tr>
<tr class="o" style="height:36.25px">
<td>6092</td>
<td>Th:Pseudo</td>
<td>Idle</td>
<td>-</td>
<td>-</td>
<td>-</td>
<td>-</td>
<td>-</td>
<td>0</td>
<td></td>
</tr>
<tr class="" style="height:36.75px">
<td>1188</td>
<td>Th:DynamicConfig</td>
<td>Idle</td>
<td>-</td>
<td>-</td>
<td>-</td>
<td>-</td>
<td>-</td>
<td>0</td>
<td></td>
</tr>
<tr class="o" style="height:65.5px">
<td>15112</td>
<td>Anthony Taylor</td>
<td>Wait:IXC</td>
<td>GetViewByName</td>
<td>Dimension</td>
<td>zLarge Dimension</td>
<td>WaitingOn<br>(9060)</td>
<td>Architect</td>
<td>9</td>
<td style="padding:0"><div class="btnp"><svg class="abs" style="left:12.5px;top:5px" width="14" height="14" viewBox="0 0 14 14"><circle cx="7" cy="7" r="6.5" fill="#fff"/><rect x="3.3" y="5.8" width="7.4" height="2.4" fill="#3f87c9"/></svg></div><div class="btnp"><svg class="abs" style="left:11px;top:6px" width="17" height="14" viewBox="0 0 17 14"><path d="M6 1.5 H2.5 C1.7 1.5 1.2 2 1.2 2.8 V11.2 C1.2 12 1.7 12.5 2.5 12.5 H6" fill="none" stroke="#fff" stroke-width="1.6"/><path d="M5 5 H9.5 V1.8 L15.5 7 L9.5 12.2 V9 H5Z" fill="#fff"/></svg></div></td>
</tr>
<tr class="" style="height:64.9px">
<td>9060</td>
<td>Oliver Martin</td>
<td>Run:R</td>
<td>ProcessExecuteEx</td>
<td>Process</td>
<td>Bedrock.Server.Wait</td>
<td>Prolog (40)</td>
<td>Architect</td>
<td>12</td>
<td style="padding:0"><div class="btnp"><svg class="abs" style="left:12.5px;top:5px" width="14" height="14" viewBox="0 0 14 14"><circle cx="7" cy="7" r="6.5" fill="#fff"/><rect x="3.3" y="5.8" width="7.4" height="2.4" fill="#3f87c9"/></svg></div><div class="btnp"><svg class="abs" style="left:11px;top:6px" width="17" height="14" viewBox="0 0 17 14"><path d="M6 1.5 H2.5 C1.7 1.5 1.2 2 1.2 2.8 V11.2 C1.2 12 1.7 12.5 2.5 12.5 H6" fill="none" stroke="#fff" stroke-width="1.6"/><path d="M5 5 H9.5 V1.8 L15.5 7 L9.5 12.2 V9 H5Z" fill="#fff"/></svg></div></td>
</tr>
</table>
<div class="abs" style="left:0;top:352px;width:994px;height:20px;background:#f1f1f1"></div>
<svg class="abs" style="left:7px;top:358px" width="8" height="8" viewBox="0 0 8 8"><path d="M1.5 4 L6.5 0.5 V7.5Z" fill="#a3a3a3"/></svg>
<svg class="abs" style="left:980px;top:358px" width="8" height="8" viewBox="0 0 8 8"><path d="M6.5 4 L1.5 0.5 V7.5Z" fill="#a3a3a3"/></svg>
</div>
<div class="panel" style="left:1301.5px;top:358.75px;width:483.5px;height:113px">
<div class="ph" style="height:41px"><svg class="abs" style="left:16px;top:10.5px" width="18" height="16" viewBox="0 0 20 16"><g fill="none" stroke="#333"><circle cx="7" cy="9" r="3.8" stroke-width="3.4" stroke-dasharray="2.4 1.2"/><circle cx="7" cy="9" r="3.3" stroke-width="2.6"/><circle cx="15.5" cy="3.5" r="2.2" stroke-width="1.8"/><circle cx="15.5" cy="12.5" r="2.2" stroke-width="1.8"/></g></svg><div class="abs" style="left:38px;top:8px">Service Control</div></div>
<div class="abs" style="left:15px;top:56.5px;width:210.5px;height:34px;background:#5cb85c;opacity:0.65;border-radius:4px;color:#fff;text-align:center;line-height:34px">Start</div>
<div class="abs" style="left:256px;top:56.5px;width:210.5px;height:34px;background:#d9534f;border-radius:4px;color:#fff;text-align:center;line-height:34px">Stop</div>
</div>
<div class="panel" style="left:1301.5px;top:492.8px;width:483.5px;height:400px">
<div class="ph" style="height:40px"><svg class="abs" style="left:16px;top:11px" width="15" height="14" viewBox="0 0 15 14"><path d="M0 1 H15 V3.5 H0Z M0 4.8 H15 V7.3 H0Z M0 8.6 H15 V11.1 H0Z M0 12 H15 V14 H0Z" fill="#333"/></svg><div class="abs" style="left:38px;top:7.5px">Message Log</div></div>
<div class="abs" style="left:15px;top:57px;width:451.5px;height:34px;box-sizing:border-box;border:1px solid #ccc;border-radius:4px;padding:6px 12px;color:#8a8a8a;line-height:20px">Filter message...</div>
<div class="abs" style="left:15px;top:107.5px;width:451.5px;height:31px;box-sizing:border-box;border:1px solid #ccc;border-radius:4px;padding:2.5px 12px;color:#333;line-height:20px">Filtered Log Level...</div>
<table class="abs" style="left:17px;top:154.7px;width:447.79999999999995px">
<colgroup><col style="width:48.5px"><col style="width:57.5px"><col style="width:73.9px"><col style="width:267.9px"></colgroup>
<tr style="height:55.5px"><th>#</th><th>User<br>Name</th><th>Time</th><th>Message</th></tr>
<tr style="height:94px;background:#fcf8e3"><td>9060</td><td>Oliver<br>Martin</td><td>15:16:25</td><td style="white-space:nowrap">Process "Bedrock.Server.Wait" run<br>from process<br>"zDim.UpdateLargeDimension" by user<br>"User2"</td></tr>
<tr style="height:55.5px;background:#fcf8e3"><td>9060</td><td>Oliver<br>Martin</td><td>15:16:23</td><td style="white-space:nowrap">Process "zDim.UpdateLargeDimension"<br>executed by user "User2"</td></tr>
</table>
</div>
</div></body></html>
